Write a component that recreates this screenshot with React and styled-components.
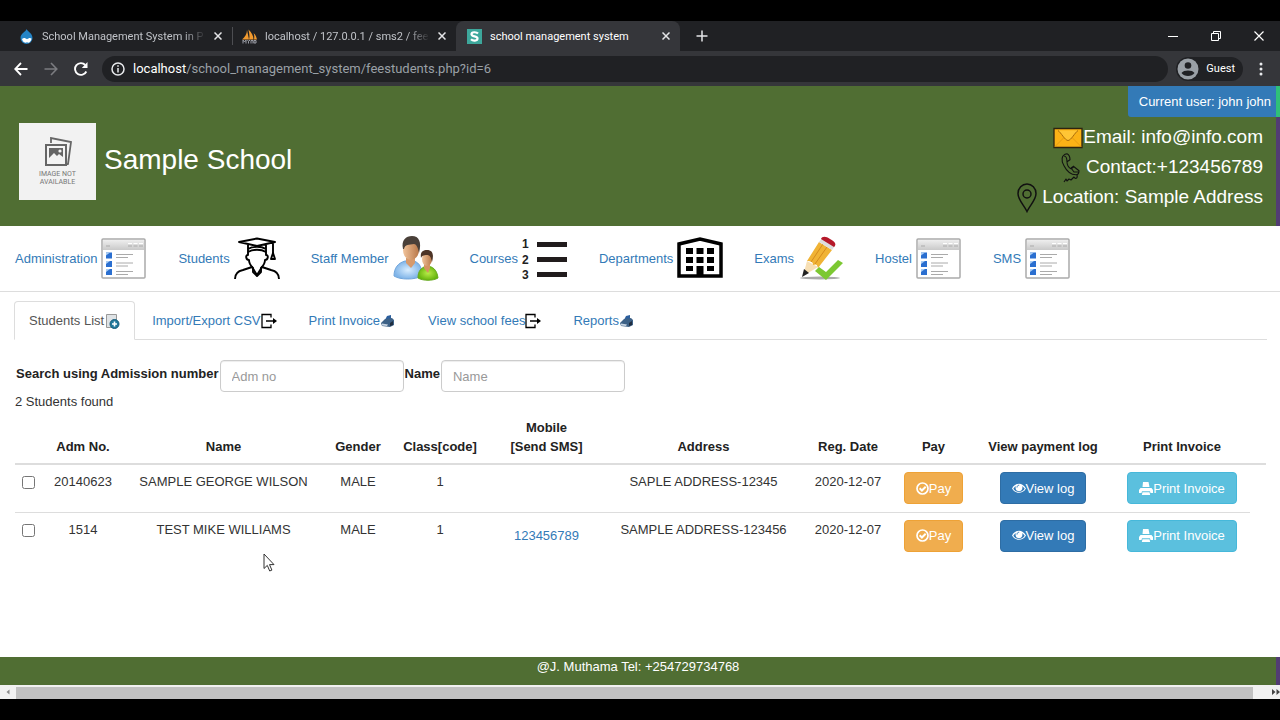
import React from "react";
import styled, { createGlobalStyle } from "styled-components";

const navItems = [
  { label: "Administration", icon: "window" },
  { label: "Students", icon: "graduate" },
  { label: "Staff Member", icon: "people" },
  { label: "Courses", icon: "numbers" },
  { label: "Departments", icon: "building" },
  { label: "Exams", icon: "pencil" },
  { label: "Hostel", icon: "window" },
  { label: "SMS", icon: "window" },
];

const subTabs = [
  { label: "Students List", icon: "add", active: true },
  { label: "Import/Export CSV", icon: "exit" },
  { label: "Print Invoice", icon: "printer" },
  { label: "View school fees", icon: "exit" },
  { label: "Reports", icon: "printer" },
];

const columns = [
  { label: "", width: 27 },
  { label: "Adm No.", width: 82 },
  { label: "Name", width: 199 },
  { label: "Gender", width: 70 },
  { label: "Class[code]", width: 94 },
  { label: <>Mobile<br />[Send SMS]</>, width: 119 },
  { label: "Address", width: 195 },
  { label: "Reg. Date", width: 94 },
  { label: "Pay", width: 77 },
  { label: "View payment log", width: 142 },
  { label: "Print Invoice", width: 136 },
  { label: "", width: 16 },
];

const students = [
  {
    adm: "20140623",
    name: "SAMPLE GEORGE WILSON",
    gender: "MALE",
    code: "1",
    mobile: "",
    address: "SAPLE ADDRESS-12345",
    date: "2020-12-07",
  },
  {
    adm: "1514",
    name: "TEST MIKE WILLIAMS",
    gender: "MALE",
    code: "1",
    mobile: "123456789",
    address: "SAMPLE ADDRESS-123456",
    date: "2020-12-07",
  },
];

const App = () => (
  <Screen>
    <GlobalStyle />
    <BrowserTabs />
    <BrowserToolbar />
    <Page>
      <Header>
        <UserBadge>Current user: john john</UserBadge>
        <Brand>
          <Logo>
            <PhotoIcon />
            <span>IMAGE NOT<br />AVAILABLE</span>
          </Logo>
          <h1>Sample School</h1>
        </Brand>
        <Contacts>
          <li><MailIcon /><span>Email: info@info.com</span></li>
          <li><PhoneIcon /><span>Contact:+123456789</span></li>
          <li><PinIcon /><span>Location: Sample Address</span></li>
        </Contacts>
      </Header>
      <MainNav>
        {navItems.map((item) => (
          <a href="#" key={item.label}>
            {item.label}
            <NavIcon name={item.icon} />
          </a>
        ))}
      </MainNav>
      <Main>
        <SubNav>
          {subTabs.map((tab) => (
            <SubTab href="#" key={tab.label} $active={tab.active}>
              {tab.label}
              <TabIcon name={tab.icon} />
            </SubTab>
          ))}
        </SubNav>
        <Content>
          <Search>
            <label htmlFor="adm">Search using Admission number</label>
            <input id="adm" type="text" placeholder="Adm no" />
            <label htmlFor="name">Name</label>
            <input id="name" type="text" placeholder="Name" />
          </Search>
          <Found>2 Students found</Found>
          <StudentTable />
        </Content>
      </Main>
      <Footer>@J. Muthama Tel: +254729734768</Footer>
    </Page>
    <Scrollbar>
      <svg width="16" height="14" viewBox="0 0 16 14"><path d="M9.500 4.500v5L6.500 7z" fill="#8a8a8a" /></svg>
      <div />
      <svg width="27" height="14" viewBox="0 0 27 14"><path d="M19 4v6l3.500-3zM23.500 4v6l3.500-3z" fill="#444" /></svg>
    </Scrollbar>
    <Cursor width="12" height="20" viewBox="0 0 12 20">
      <path d="M1 1v14.500l3.300-3.100 2.400 5.600 2.200-.9-2.400-5.500H11z" fill="#fff" stroke="#333" />
    </Cursor>
  </Screen>
);

const StudentTable = () => (
  <Table>
    <colgroup>
      {columns.map((col, i) => <Col key={i} $width={col.width} />)}
    </colgroup>
    <thead>
      <tr>
        {columns.map((col, i) => <th key={i}>{col.label}</th>)}
      </tr>
    </thead>
    <tbody>
      {students.map((s) => (
        <tr key={s.adm}>
          <td><input type="checkbox" aria-label={s.name} /></td>
          <td>{s.adm}</td>
          <td>{s.name}</td>
          <td>{s.gender}</td>
          <td>{s.code}</td>
          <td>{s.mobile && <SmsLink href="#">{s.mobile}</SmsLink>}</td>
          <td>{s.address}</td>
          <td>{s.date}</td>
          <td><Button $bg="#f0ad4e" $border="#eea236"><OkIcon />Pay</Button></td>
          <td><Button $bg="#337ab7" $border="#2e6da4"><EyeIcon />View log</Button></td>
          <td><Button $bg="#5bc0de" $border="#46b8da"><PrintIcon />Print Invoice</Button></td>
        </tr>
      ))}
    </tbody>
  </Table>
);

const BrowserTabs = () => (
  <TabStrip>
    <BrowserTab>
      <svg width="15" height="15" viewBox="0 0 15 15">
        <path d="M7.500 0C8 2 13.500 4 13.500 9a6 6 0 0 1-12 0C1.500 4 7 3 7.500 0z" fill="#2484c6" />
        <path d="M3 10c2-2 3.500-.8 5 .2 1.500-.9 3-2 4.500-.6-.3 2.500-1.500 3.600-3 4.200-1-.8-2-.8-3 0-2-.5-3.200-1.800-3.500-3.800z" fill="#fff" />
      </svg>
      <span>School Management System in P</span>
      <CloseButton />
    </BrowserTab>
    <BrowserTab $divided>
      <svg width="15" height="15" viewBox="0 0 15 15">
        <path d="M0 10.500C3 8 5 5 5 1l2 9.500zM7 10.500c1-3 0-7-.5-10C9.500 3 11.500 7 11.500 10.500zM12 10.500c.5-2 .3-5-.5-6.500 2 1.500 3 4 3.500 6.500z" fill="#f29a2e" />
        <path d="M1 14.500v-3.500l1.500 2L4 11v3.500M5.500 11l1 1.500L8 11M6.500 12.500v2M9 14.500V11.500h2v3M12 14v-2.500h2V14h-2" fill="none" stroke="#9a9da5" />
      </svg>
      <span>localhost / 127.0.0.1 / sms2 / fee</span>
      <CloseButton />
    </BrowserTab>
    <BrowserTab $active>
      <Favicon viewBox="0 0 15 15">
        <path d="M0 0h15v15H0z" fill="#3da79b" />
        <path d="M11 4.500C9.500 2.800 4.500 2.600 4.500 5.200c0 3 6 1.400 6 4.300 0 2.600-4.700 2.600-6.500.8" fill="none" stroke="#fff" strokeWidth="2.200" />
      </Favicon>
      <span>school management system</span>
      <CloseButton />
    </BrowserTab>
    <NewTab aria-label="New tab">
      <svg width="12" height="12" viewBox="0 0 12 12"><path d="M6 .5v11M.5 6h11" stroke="#e4e5e7" strokeWidth="1.500" /></svg>
    </NewTab>
    <WindowControls>
      <button aria-label="Minimize"><svg width="10" height="10" viewBox="0 0 10 10"><path d="M0 5.500h10" stroke="#fff" /></svg></button>
      <button aria-label="Restore">
        <svg width="10" height="10" viewBox="0 0 10 10"><path d="M.5 2.500h7v7h-7zM2.500 2.500v-2h7v7h-2" fill="none" stroke="#fff" /></svg>
      </button>
      <button aria-label="Close"><svg width="10" height="10" viewBox="0 0 10 10"><path d="M.5.5l9 9M9.500.5l-9 9" stroke="#fff" strokeWidth="1.200" /></svg></button>
    </WindowControls>
  </TabStrip>
);

const CloseButton = () => (
  <button aria-label="Close tab">
    <svg width="8" height="8" viewBox="0 0 8 8"><path d="M.5.5l7 7M7.500.5l-7 7" stroke="#e4e5e7" strokeWidth="1.500" /></svg>
  </button>
);

const BrowserToolbar = () => (
  <Toolbar>
    <ToolButton aria-label="Back">
      <svg width="14" height="14" viewBox="0 0 14 14" fill="none" stroke="#fff" strokeWidth="1.800"><path d="M13.500 7H1.500M7 1L1.200 7 7 13" /></svg>
    </ToolButton>
    <ToolButton aria-label="Forward">
      <svg width="14" height="14" viewBox="0 0 14 14" fill="none" stroke="#7b7c80" strokeWidth="1.600"><path d="M.5 7h12M7 1l5.800 6L7 13" /></svg>
    </ToolButton>
    <ToolButton aria-label="Reload">
      <svg width="14" height="14" viewBox="0 0 14 14" fill="none" stroke="#fff" strokeWidth="1.900">
        <path d="M12.300 9.500A5.900 5.900 0 1 1 11.300 3" />
        <path d="M13.500 0v6H7.800z" fill="#fff" stroke="none" />
      </svg>
    </ToolButton>
    <Omnibox>
      <svg width="14" height="14" viewBox="0 0 14 14" fill="none" stroke="#e8eaed" strokeWidth="1.500">
        <circle cx="7" cy="7" r="6" />
        <path d="M7 6v4.500M7 3.300v1.500" />
      </svg>
      <span><b>localhost</b>/school_management_system/feestudents.php?id=6</span>
    </Omnibox>
    <Guest>
      <svg width="22" height="22" viewBox="0 0 22 22">
        <circle cx="11" cy="11" r="10.500" fill="#9aa0a6" />
        <circle cx="11" cy="7.500" r="3.300" fill="#202124" />
        <path d="M4.500 15c2-3.300 11-3.300 13 0-2.500 4-10.500 4-13 0z" fill="#202124" />
      </svg>
      Guest
    </Guest>
    <ToolButton aria-label="Menu">
      <svg width="4" height="14" viewBox="0 0 4 14" fill="#e8eaed"><circle cx="2" cy="2" r="1.500" /><circle cx="2" cy="7" r="1.500" /><circle cx="2" cy="12" r="1.500" /></svg>
    </ToolButton>
  </Toolbar>
);

/* icons */

const NavIcon = ({ name }) => (
  <svg width="46" height="46" viewBox="0 0 46 46">
    {name === "window" && (
      <>
        <defs>
          <linearGradient id="bar" x2="0" y2="1"><stop stopColor="#eee" /><stop offset="1" stopColor="#c9c9c9" /></linearGradient>
        </defs>
        <rect x="1" y="3" width="43" height="39" rx="1" fill="#fff" stroke="#aaa" strokeWidth="1.500" />
        <path d="M2 4h41v10H2z" fill="url(#bar)" />
        <path d="M5 10h4M27 10h4M32.500 10h4M38 10h4" stroke="#aaa" />
        <path d="M27 7.500h4M32.500 7.500h4M38 7.500h4" stroke="#fff" />
        <path d="M5 16.500h6v6H5zM5 25h6v6H5zM5 33h6v6H5z" fill="#2b6fd0" />
        <path d="M5 16.500h4l-4 3zM5 25h4l-4 3zM5 33h4l-4 3z" fill="#a9cdf4" />
        <path d="M15 18.500h17M15 21.500h12M15 27h17M15 30h12M15 35.500h17M15 38.500h12" stroke="#aaa" />
      </>
    )}
    {name === "graduate" && (
      <g fill="none" stroke="#000" strokeWidth="1.900" strokeLinejoin="round">
        <path d="M5 6L23 2.500 41 6l-18 4zM14 8v6M32 8v6M14 13c5-3 13-3 18 0M14 16c5-3 13-3 18 0M39 7v11" />
        <path d="M39 17l-2 6h4z" />
        <path d="M14 14v5c-3 0-2 5 1 5 0 4 2 6 4 8v4l4 4 4-4v-4c2-2 4-4 4-8 3 0 4-5 1-5v-5" />
        <path d="M1 43c0-6 3-8 8-9l9-3 5 8 5-8 9 3c5 1 8 3 8 9" />
      </g>
    )}
    {name === "people" && (
      <>
        <defs>
          <radialGradient id="blue"><stop stopColor="#d8edff" /><stop offset="1" stopColor="#7fb4e8" /></radialGradient>
          <radialGradient id="green"><stop stopColor="#b8ec48" /><stop offset="1" stopColor="#67b50e" /></radialGradient>
          <linearGradient id="skin"><stop stopColor="#f1c39a" /><stop offset="1" stopColor="#b87748" /></linearGradient>
        </defs>
        <path d="M1 40C1 32 5 27 12 25h9c6 2 8 7 8 15-7 4-22 4-28 0z" fill="url(#blue)" stroke="#70a5db" />
        <path d="M13 22h9v5l-4 5-5-5z" fill="#d79a6c" />
        <ellipse cx="18" cy="14" rx="8" ry="10" fill="url(#skin)" />
        <path d="M10 13C8 4 13 0 19 0c7 0 10 6 7 17-1-6-3-9-5-9-5 1-9 0-10 5z" fill="#4a4039" />
        <path d="M25 42c0-7 3-10 8-12 7 0 11 4 12 12-5 3-15 3-20 0z" fill="url(#green)" stroke="#65a91d" />
        <path d="M31 28h6v4l-2 5-4-5z" fill="#d59362" />
        <ellipse cx="34" cy="23" rx="5" ry="7" fill="url(#skin)" />
        <path d="M28 22c-1-6 2-8 6-8 6 0 7 5 5 12-1-5-2-6-4-7-3 0-6 0-7 3z" fill="#4d3426" />
      </>
    )}
    {name === "numbers" && (
      <>
        <path d="M15 8.500h30M15 23.500h30M15 38.500h30" stroke="#211c1d" strokeWidth="5" />
        <g fontFamily="Liberation Sans, sans-serif" fontSize="12" fontWeight="700" fill="#222">
          <text x="0" y="12">1</text><text x="0" y="28">2</text><text x="0" y="43">3</text>
        </g>
      </>
    )}
    {name === "building" && (
      <>
        <path d="M2 40V8l21-5 21 5v32z" fill="#fff" stroke="#000" strokeWidth="3.500" />
        <path d="M9 12h7v6H9zM19.500 12h7v6h-7zM30 12h7v6h-7zM9 21h7v6H9zM19.500 21h7v6h-7zM30 21h7v6h-7zM9 30h7v5H9zM19.500 30h7v10h-7zM30 30h7v5h-7z" />
      </>
    )}
    {name === "pencil" && (
      <>
        <ellipse cx="22" cy="42" rx="20" ry="1.500" fill="#aaa" />
        <path d="M5 40l4-15 11 6z" fill="#f7dfb4" />
        <path d="M9 25L21 6l13 8-14 18c-1-4-2-4-5-3 0-3-2-4-6-4z" fill="#f0b335" />
        <path d="M13 26L25 8M17 28l12-17" stroke="#d58a1d" />
        <path d="M21 6l3-4 13 8-3 4z" fill="#ddd" />
        <path d="M23 3c1-3 5-3 9 0 5 3 7 5 4 8z" fill="#b5182a" />
        <path d="M4 41l2-8 5 4z" fill="#222" />
        <path d="M17 35l4-4 7 5 12-12 5 3-17 17z" fill="#7cc832" />
      </>
    )}
  </svg>
);

const TabIcon = ({ name }) => {
  if (name === "add") {
    return (
      <svg width="16" height="16" viewBox="0 0 16 16">
        <path d="M2.500 1.500h10v13h-10z" fill="#dfe3e6" stroke="#999" />
        <circle cx="10.500" cy="11" r="4.500" fill="#21799c" stroke="#175d7b" />
        <path d="M10.500 8.500v5M8 11h5" stroke="#fff" strokeWidth="1.600" />
      </svg>
    );
  }
  if (name === "exit") {
    return (
      <svg width="16" height="16" viewBox="0 0 16 16">
        <path d="M10 4.500V1.500H1v13h9v-3M5 8h8" fill="none" stroke="#000" strokeWidth="1.300" />
        <path d="M12 5l4 3-4 3z" />
      </svg>
    );
  }
  return (
    <svg width="16" height="12" viewBox="-1 0 16 12">
      <path d="M4 5l2-4 4-1v5z" fill="#2c5f9e" />
      <path d="M0 8l4-4 7-1 2 2v5l-4 2-8-1z" fill="#3d6186" />
      <path d="M1 8.500l6 1-1 1.500-5-.5z" fill="#c7d4e2" />
      <path d="M9 8l3-2v4l-3 1z" fill="#202e40" />
    </svg>
  );
};

const PhotoIcon = () => (
  <svg width="28" height="30" viewBox="0 0 28 30">
    <path d="M7 6V1l20 4-3 22-3 .5" fill="none" stroke="#666" strokeWidth="1.800" />
    <path d="M2 8h20v20H2z" fill="#f4f4f4" stroke="#666" strokeWidth="2" />
    <path d="M5 11h14v13H5z" fill="#666" />
    <path d="M5 21l5-5 3 3 2-2 4 3v4H5z" fill="#f4f4f4" />
    <circle cx="16" cy="14" r="1.600" fill="#f4f4f4" />
  </svg>
);

const MailIcon = () => (
  <svg width="30" height="30" viewBox="0 0 30 30">
    <path d="M1 5.500h28v19H1z" fill="#fbb216" stroke="#2d2410" strokeWidth="1.300" />
    <path d="M2 23.500l9-9M28 23.500l-9-9" stroke="#e59b12" />
    <path d="M5 7.500c3 2 7 10 10 10s7-8 10-10" fill="#ffc535" stroke="#a96b0a" />
  </svg>
);

const PhoneIcon = () => (
  <svg width="30" height="30" viewBox="0 0 30 30" fill="none" stroke="#111" strokeWidth="1.100" strokeLinejoin="round">
    <path d="M11 .8c-6 1-6 7-3 12 3 6 7 9 12 9 2 0 3-2 3-4l-5-4-3 2c-2-1-4-4-4-7l3-2c0-3-1-5-3-6zM8 3c2 0 3 2 3 6M15 15l3 4h5M15 15l3-2" />
    <path d="M21 22c1 4-2 4-3 2l-3 3-2-1-2 2-1-2-2 3" />
  </svg>
);

const PinIcon = () => (
  <svg width="30" height="30" viewBox="0 0 30 30" fill="none" stroke="#111" strokeWidth="1.500">
    <path d="M15 28.500C12 22 6 17 6 10.500a9 9.500 0 0 1 18 0C24 17 18 22 15 28.500z" />
    <circle cx="15" cy="11" r="4" />
  </svg>
);

const OkIcon = () => (
  <svg width="13" height="13" viewBox="0 0 13 13" fill="none" stroke="#fff">
    <circle cx="6.500" cy="6.500" r="5.500" strokeWidth="1.700" />
    <path d="M3.700 6.300l2.200 2.200 3.800-3.800" strokeWidth="2" />
  </svg>
);

const EyeIcon = () => (
  <svg width="14" height="13" viewBox="0 0 14 13">
    <path d="M0 6.500C3.500.2 10.500.2 14 6.500 10.500 12.300 3.500 12.300 0 6.500z" fill="#fff" />
    <path d="M1.300 6.800C2.500 5 3 4.600 3.800 4.200c-.8 3 .8 5 3.200 5s4-2 3.200-5c.8.4 1.300.8 2.500 2.600C9.700 11.200 4.300 11.200 1.300 6.800z" fill="#337ab7" />
    <path d="M5 5.500c0-1.500 1-2.300 2.200-2.300" fill="none" stroke="#337ab7" />
  </svg>
);

const PrintIcon = () => (
  <svg width="14" height="13" viewBox="0 0 14 13" fill="#fff">
    <path d="M4 0h5.500l1 5H3.500zM1.500 6h11L14 8v3h-2.500L11 9.300H3L2.500 11H0V8zM3.500 10.300h7l.7 2.700H2.800z" />
  </svg>
);

const GlobalStyle = createGlobalStyle`
  * {
    box-sizing: border-box;
  }
  body {
    margin: 0;
    background: #000;
    color: #333;
    font-family: "Liberation Sans", Arial, sans-serif;
    font-size: 13px;
    line-height: 19px;
  }
  a {
    color: #337ab7;
    text-decoration: none;
  }
  button, input {
    font: inherit;
  }
  button {
    cursor: pointer;
  }
  svg {
    display: block;
    flex: none;
  }
`;

const Screen = styled.div`
  position: relative;
  display: flex;
  flex-direction: column;
  min-height: 100vh;
  padding: 21px 0;
`;

const TabStrip = styled.div`
  display: flex;
  align-items: center;
  height: 30px;
  padding-left: 8px;
  background: #202124;
  font-family: Roboto, sans-serif;
  font-size: 11px;
  button {
    display: grid;
    place-items: center;
    padding: 0;
    border: 0;
    background: none;
  }
`;

const BrowserTab = styled.div`
  display: flex;
  align-items: center;
  flex: 0 1 224px;
  height: 30px;
  min-width: 0;
  gap: 8px;
  padding: 0 10px 0 11px;
  border-radius: 8px 8px 0 0;
  background: ${(p) => (p.$active ? "#35363a" : "none")};
  color: ${(p) => (p.$active ? "#fff" : "#c0c3c8")};
  ${(p) => p.$divided && `
    &::before {
      content: "";
      width: 1px;
      height: 18px;
      margin: 0 1px 0 -11px;
      background: #4d4e52;
    }
  `}
  span {
    flex: 1;
    overflow: hidden;
    white-space: nowrap;
    mask-image: ${(p) => (p.$active ? "none" : "linear-gradient(90deg, #000 86%, transparent)")};
  }
  button {
    width: 8px;
    height: 16px;
  }
`;

const Favicon = styled.svg`
  width: 15px;
  height: 15px;
`;

const NewTab = styled.button`
  width: 44px;
  height: 30px;
`;

const WindowControls = styled.div`
  display: flex;
  margin-left: auto;
  button {
    width: 43px;
    height: 24px;
  }
`;

const Toolbar = styled.div`
  display: flex;
  align-items: center;
  height: 35px;
  padding: 0 4px 0 6px;
  background: #35363a;
  font-family: Roboto, sans-serif;
`;

const ToolButton = styled.button`
  display: grid;
  place-items: center;
  width: 30px;
  height: 26px;
  padding: 0;
  border: 0;
  background: none;
`;

const Omnibox = styled.div`
  display: flex;
  flex: 1;
  align-items: center;
  gap: 8px;
  height: 26px;
  margin: 0 8px 0 6px;
  padding: 0 9px;
  border-radius: 13px;
  background: #202124;
  color: #9aa0a6;
  b {
    color: #fff;
    font-weight: 400;
  }
`;

const Guest = styled.button`
  display: flex;
  align-items: center;
  gap: 7px;
  height: 24px;
  padding: 0 8px 0 1px;
  margin-right: 3px;
  border: 0;
  border-radius: 12px;
  background: #202124;
  color: #fff;
  font-size: 11px;
`;

const Page = styled.div`
  display: flex;
  flex: 1;
  flex-direction: column;
  background: #fff;
`;

const Header = styled.header`
  position: relative;
  display: flex;
  justify-content: space-between;
  padding: 37px 13px 13px 19px;
  border-right: 4px solid #523c73;
  background: #506e33;
  color: #fff;
`;

const UserBadge = styled.div`
  position: absolute;
  top: 0;
  right: -4px;
  padding: 6px 5px 6px 11px;
  border-right: 4px solid #2fc078;
  border-radius: 0 0 0 3px;
  background: #337ab7;
`;

const Brand = styled.div`
  display: flex;
  gap: 8px;
  h1 {
    margin: 0;
    font-size: 28px;
    font-weight: 400;
    line-height: 74px;
  }
`;

const Logo = styled.div`
  display: flex;
  flex-direction: column;
  align-items: center;
  gap: 3px;
  width: 77px;
  height: 77px;
  padding-top: 14px;
  background: #f2f2f2;
  color: #777;
  font: 7px/8px Roboto, sans-serif;
  text-align: center;
`;

const Contacts = styled.ul`
  margin: 0;
  padding: 0;
  list-style: none;
  font-size: 19px;
  line-height: 27px;
  li {
    display: flex;
    justify-content: flex-end;
    height: 30px;
  }
`;

const MainNav = styled.nav`
  display: flex;
  gap: 31px;
  height: 66px;
  padding: 9px 15px;
  border-bottom: 1px solid #ddd;
  a {
    display: flex;
    align-items: center;
    gap: 4px;
    height: 46px;
    white-space: nowrap;
  }
  svg {
    margin-top: 2px;
  }
`;

const Main = styled.main`
  flex: 1;
  padding: 9px 13px 20px 14px;
`;

const SubNav = styled.nav`
  display: flex;
  gap: 2px;
  border-bottom: 1px solid #ddd;
`;

const SubTab = styled.a`
  display: flex;
  align-items: center;
  height: 39px;
  margin-bottom: -1px;
  padding: 0 14px;
  border: 1px solid ${(p) => (p.$active ? "#ddd" : "transparent")};
  border-bottom-color: ${(p) => (p.$active ? "#fff" : "transparent")};
  border-radius: 4px 4px 0 0;
  color: ${(p) => (p.$active ? "#555" : "#337ab7")};
`;

const Content = styled.div`
  padding: 20px 1px 0;
`;

const Search = styled.form`
  display: flex;
  align-items: flex-start;
  label {
    padding-left: 1px;
    color: #222;
    font-weight: 700;
    line-height: 28px;
  }
  input {
    width: 184px;
    height: 32px;
    margin-left: 1px;
    padding: 0 11px;
    border: 1px solid #ccc;
    border-radius: 4px;
    color: #555;
    box-shadow: inset 0 1px 1px rgba(0, 0, 0, .075);
    &::placeholder {
      color: #999;
    }
  }
`;

const Found = styled.p`
  margin: 0;
`;

const Table = styled.table`
  width: 100%;
  table-layout: fixed;
  border-collapse: collapse;
  text-align: center;
  th {
    padding: 7px;
    border-bottom: 2px solid #ddd;
    color: #222;
    vertical-align: bottom;
  }
  td {
    height: 48px;
    padding: 7px 0;
    vertical-align: top;
  }
  tr + tr td {
    border-top: 1px solid #ddd;
  }
  input {
    display: block;
    width: 13px;
    height: 13px;
    margin: 4px auto 0;
  }
`;

const Col = styled.col`
  width: ${(p) => p.$width}px;
`;

const SmsLink = styled.a`
  line-height: 32px;
`;

const Button = styled.button`
  display: inline-flex;
  align-items: center;
  height: 32px;
  padding: 0 11px;
  border: 1px solid ${(p) => p.$border};
  border-radius: 4px;
  background: ${(p) => p.$bg};
  color: #fff;
  white-space: nowrap;
  vertical-align: top;
`;

const Footer = styled.footer`
  height: 28px;
  border-right: 4px solid #523c73;
  background: #506e33;
  color: #fff;
  text-align: center;
`;

const Scrollbar = styled.div`
  display: flex;
  height: 14px;
  background: #f1f1f1;
  div {
    flex: 1;
    margin-top: 2px;
    background: #c1c1c1;
  }
`;

const Cursor = styled.svg`
  position: absolute;
  top: 553px;
  left: 263px;
  pointer-events: none;
`;

export default App;
